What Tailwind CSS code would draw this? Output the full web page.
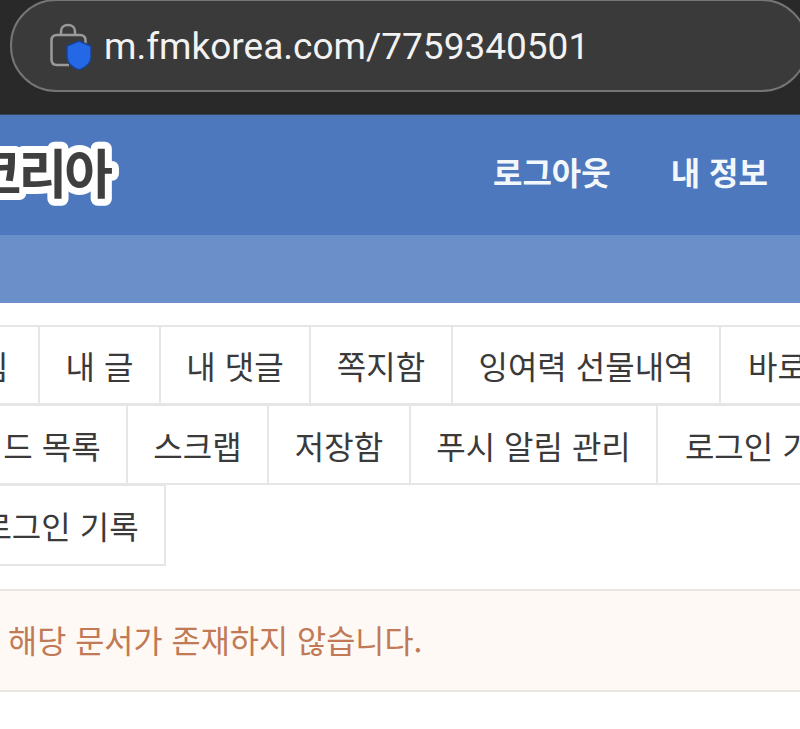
<!DOCTYPE html>
<html lang="ko">
<head>
<meta charset="UTF-8" />
<meta name="viewport" content="width=device-width, initial-scale=1.0" />
<title>에펨코리아</title>
<script src="https://cdn.jsdelivr.net/npm/@tailwindcss/browser@4"></script>
</head>
<body class="bg-white text-[#3a3a3a] overflow-hidden font-['Noto_Sans_CJK_KR','Noto_Sans',sans-serif]">

  <!-- Browser address bar -->
  <div class="h-[115px] bg-[#292929] overflow-hidden border-b border-[#33445f]">
    <div class="flex items-center h-[93px] -mt-[1px] ml-[10px] -mr-[8px] pl-[37px] rounded-[46px] border-2 border-[#757575] bg-[#3a3a3a]">
      <svg class="w-[44px] h-[48px] shrink-0" viewBox="0 0 44 48" fill="none">
        <path d="M12 13V9.500C12 5.500 15 3 19 3C23 3 26 5.500 26 9.500V13" stroke="#9a9a9a" stroke-width="2.500"/>
        <path d="M20 43H8C4.500 43 2.500 41 2.500 37.500V18.500C2.500 15 4.500 13 8 13H31C34.500 13 36.500 15 36.500 18.500V24" stroke="#9a9a9a" stroke-width="2.500"/>
        <path d="M30 19L42 24V35C42 41 36.500 45.500 30 48C23.500 45.500 18 41 18 35V24Z" fill="#2468e6" stroke="#1b4291" stroke-width="1.500"/>
      </svg>
      <span class="ml-[11px] pt-[1px] font-['Roboto',sans-serif] text-[37px] leading-none text-[#f2f2f2]">m.fmkorea.com/7759340501</span>
    </div>
  </div>

  <!-- Site header -->
  <header class="relative flex items-center justify-end h-[120px] bg-[#4d78bd] pr-[32px]">
    <svg class="absolute left-0 top-0 w-[130px] h-[120px]" viewBox="0 0 130 120">
      <text x="110" y="79" text-anchor="end" font-size="53" font-weight="700" letter-spacing="-3" fill="#3f3f3f" stroke="white" stroke-width="14" stroke-linejoin="round" paint-order="stroke">에펨코리아</text>
    </svg>
    <nav class="flex gap-[60px] pb-[9px] text-[32px] font-bold text-[#f2f7fc]">
      <a>로그아웃</a>
      <a>내 정보</a>
    </nav>
  </header>
  <div class="h-[68px] bg-[#6b8fc8]"></div>

  <!-- Member menu -->
  <div class="pt-[22px] text-[32px] leading-none">
    <ul class="flex h-[80px] -ml-[82px] whitespace-nowrap">
      <li class="flex shrink-0 items-center justify-center w-[122px] border-2 border-[#e6e6e6]">알림</li>
      <li class="flex shrink-0 items-center justify-center w-[123px] -ml-[2px] border-2 border-[#e6e6e6]">내 글</li>
      <li class="flex shrink-0 items-center justify-center w-[152px] -ml-[2px] border-2 border-[#e6e6e6]">내 댓글</li>
      <li class="flex shrink-0 items-center justify-center w-[144px] -ml-[2px] border-2 border-[#e6e6e6]">쪽지함</li>
      <li class="flex shrink-0 items-center justify-center w-[270px] -ml-[2px] border-2 border-[#e6e6e6]">잉여력 선물내역</li>
      <li class="flex shrink-0 items-center justify-center w-[176px] -ml-[2px] border-2 border-[#e6e6e6]">바로가기</li>
    </ul>
    <ul class="flex h-[81px] -mt-[1px] -ml-[83px] whitespace-nowrap">
      <li class="flex shrink-0 items-center justify-center w-[211px] border-2 border-[#e6e6e6]">키워드 목록</li>
      <li class="flex shrink-0 items-center justify-center w-[143px] -ml-[2px] border-2 border-[#e6e6e6]">스크랩</li>
      <li class="flex shrink-0 items-center justify-center w-[144px] -ml-[2px] border-2 border-[#e6e6e6]">저장함</li>
      <li class="flex shrink-0 items-center justify-center w-[249px] -ml-[2px] border-2 border-[#e6e6e6]">푸시 알림 관리</li>
      <li class="flex shrink-0 items-center justify-center w-[214px] -ml-[2px] border-2 border-[#e6e6e6]">로그인 기기</li>
    </ul>
    <ul class="flex h-[82px] -mt-[1px] -ml-[45px] whitespace-nowrap">
      <li class="flex shrink-0 items-center justify-center w-[211px] border-2 border-[#e6e6e6]">로그인 기록</li>
    </ul>
  </div>

  <!-- Message -->
  <div class="mt-[23px] flex items-center h-[103px] pl-[8px] pb-[2px] bg-[#fef9f5] border-y-2 border-[#e9e6e2] text-[31.7px] text-[#c17a55]">
    해당 문서가 존재하지 않습니다.
  </div>

</body>
</html>
